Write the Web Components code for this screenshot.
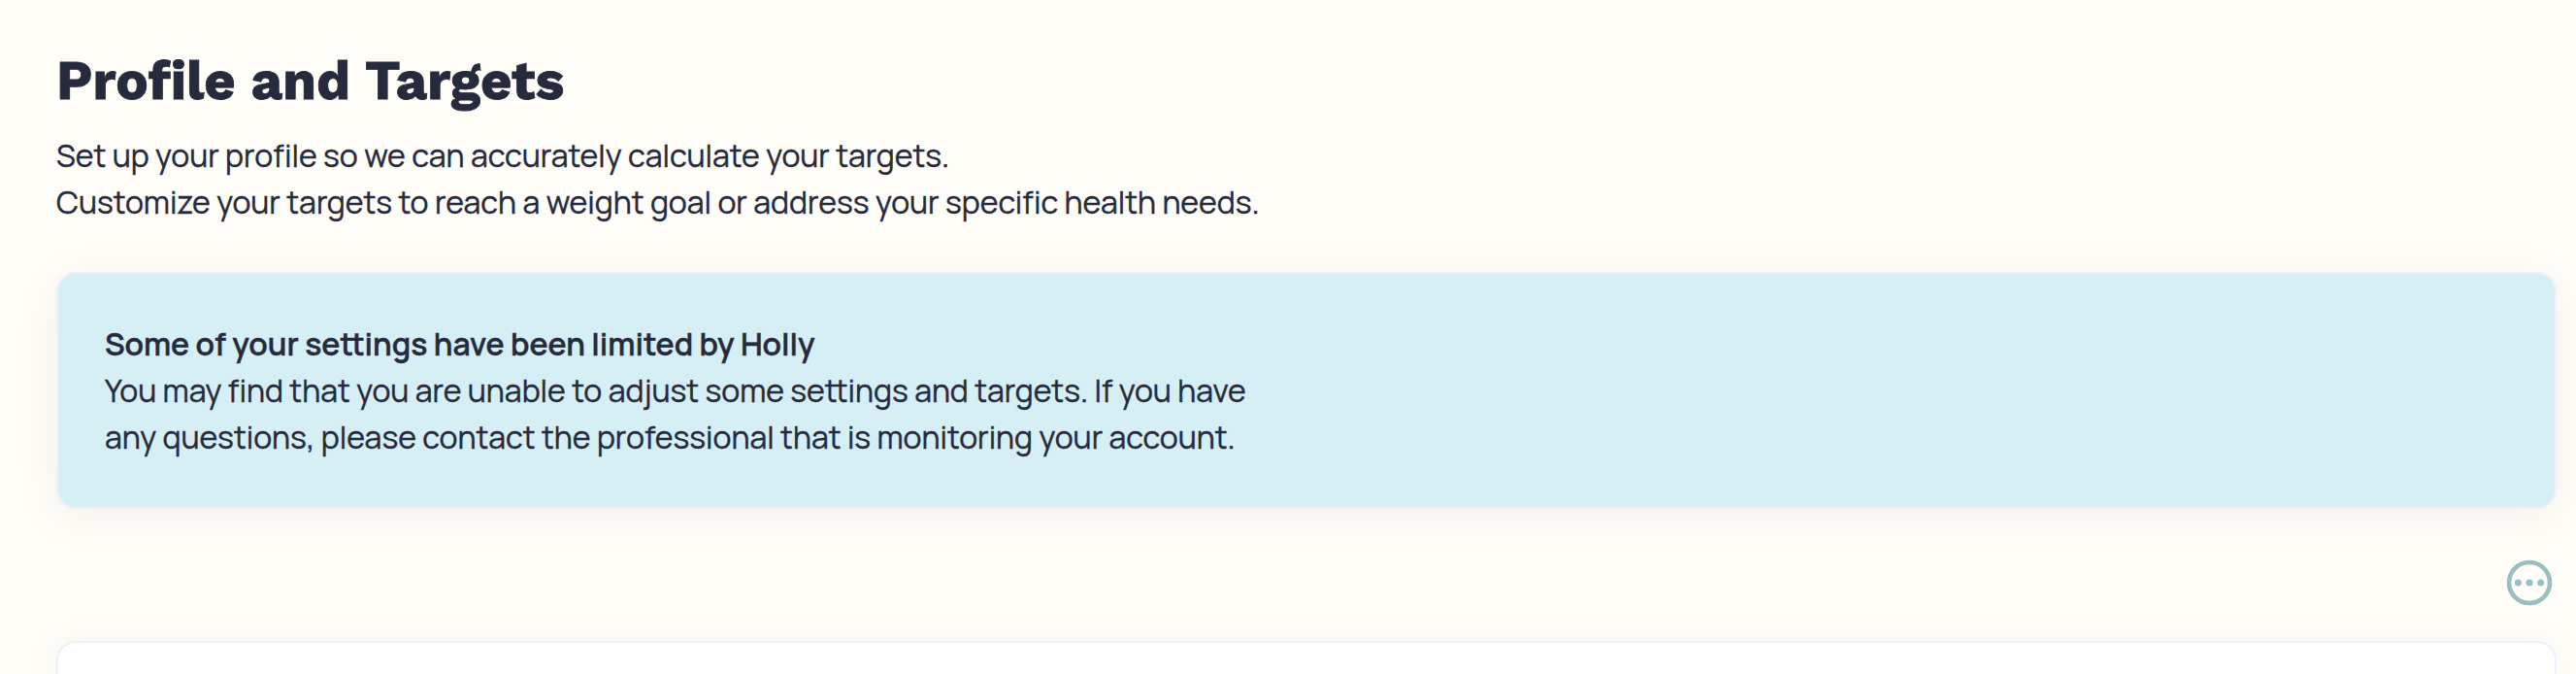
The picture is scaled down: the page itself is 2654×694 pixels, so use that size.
<!DOCTYPE html>
<html lang="en">
<head>
<meta charset="utf-8">
<title>Profile and Targets</title>
<style>
body {
    margin: 0;
    height: 694px;
    overflow: hidden;
    background-color: #fffdf8;
    color: #262a3d;
    font-family: Manrope, Inter, "Liberation Sans", sans-serif;
    font-size: 32px;
    line-height: 48px;
    -webkit-text-stroke: 0.4px currentColor;
}
</style>
</head>
<body>
<profile-page>
    <page-header slot="header" data-title="Profile and Targets">
        <text-line>Set up your profile so we can accurately calculate your targets.</text-line>
        <text-line>Customize your targets to reach a weight goal or address your specific health needs.</text-line>
    </page-header>
    <info-card class="notice">
        <text-line class="title">Some of your settings have been limited by Holly</text-line>
        <text-line>You may find that you are unable to adjust some settings and targets. If you have</text-line>
        <text-line>any questions, please contact the professional that is monitoring your account.</text-line>
    </info-card>
    <more-button></more-button>
    <info-card class="panel"></info-card>
</profile-page>

<script>
const makeTemplate = (html) => {
    const template = document.createElement("template");
    template.innerHTML = html;
    return template;
};

class BaseElement extends HTMLElement{
    constructor(){
        super();
        this.attachShadow({mode:"open"});
        this.shadowRoot.appendChild(this.constructor.template.content.cloneNode(true));
    }
}

// one line of copy, never wraps
class TextLine extends BaseElement{
    static template = makeTemplate(`
<style>
:host {
    display: block;
    white-space: nowrap;
}
:host(.title) {
    font-weight: 600;
}
</style>
<slot></slot>`);
}
customElements.define("text-line", TextLine);

class PageHeader extends BaseElement{
    static template = makeTemplate(`
<style>
:host {
    display: block;
}
h1 {
    margin: 0 0 21px;
    font-family: "Work Sans", Inter, "Liberation Sans", sans-serif;
    font-size: 56px;
    font-weight: 700;
    line-height: 64px;
    white-space: nowrap;
    -webkit-text-stroke-width: 0.8px;
}
</style>
<h1></h1>
<slot></slot>`);

    connectedCallback(){
        this.shadowRoot.querySelector("h1").textContent = this.dataset.title;
    }
}
customElements.define("page-header", PageHeader);

class InfoCard extends BaseElement{
    static template = makeTemplate(`
<style>
:host {
    display: block;
    box-sizing: border-box;
    padding: 48px;
    border: 2px solid #eef0fa;
    border-radius: 20px;
    background-color: #fff;
    box-shadow: 0 8px 48px rgba(20, 20, 30, 0.06);
}
:host(.notice) {
    background-color: #d5eff4;
}
/* runs off the bottom of the page */
:host(.panel) {
    flex: 1;
    min-height: 34px;
    padding: 0;
    border-bottom: 0;
    border-radius: 20px 20px 0 0;
}
</style>
<slot></slot>`);
}
customElements.define("info-card", InfoCard);

class MoreButton extends BaseElement{
    static template = makeTemplate(`
<style>
:host {
    display: flex;
    justify-content: flex-end;
}
button {
    display: block;
    width: 56px;
    height: 56px;
    padding: 0;
    border: 0;
    background: none;
    color: #9abfbf;
}
svg {
    display: block;
}
</style>
<button aria-label="More">
    <svg width="56" height="56" viewBox="0 0 24 24" fill="currentColor">
        <circle cx="12" cy="12" r="9" fill="none" stroke="currentColor" stroke-width="2"/>
        <circle cx="7" cy="12" r="1.5"/>
        <circle cx="12" cy="12" r="1.5"/>
        <circle cx="17" cy="12" r="1.5"/>
    </svg>
</button>`);
}
customElements.define("more-button", MoreButton);

class ProfilePage extends BaseElement{
    static template = makeTemplate(`
<style>
:host {
    display: flex;
    flex-direction: column;
    box-sizing: border-box;
    height: 100%;
    padding: 51px 20px 0 58px;
}
main {
    display: flex;
    flex: 1;
    flex-direction: column;
}
::slotted(info-card.notice) {
    margin-top: 48px;
}
::slotted(more-button) {
    margin: 48px 0 32px;
}
</style>
<slot name="header"></slot>
<main><slot></slot></main>`);
}
customElements.define("profile-page", ProfilePage);
</script>
</body>
</html>
